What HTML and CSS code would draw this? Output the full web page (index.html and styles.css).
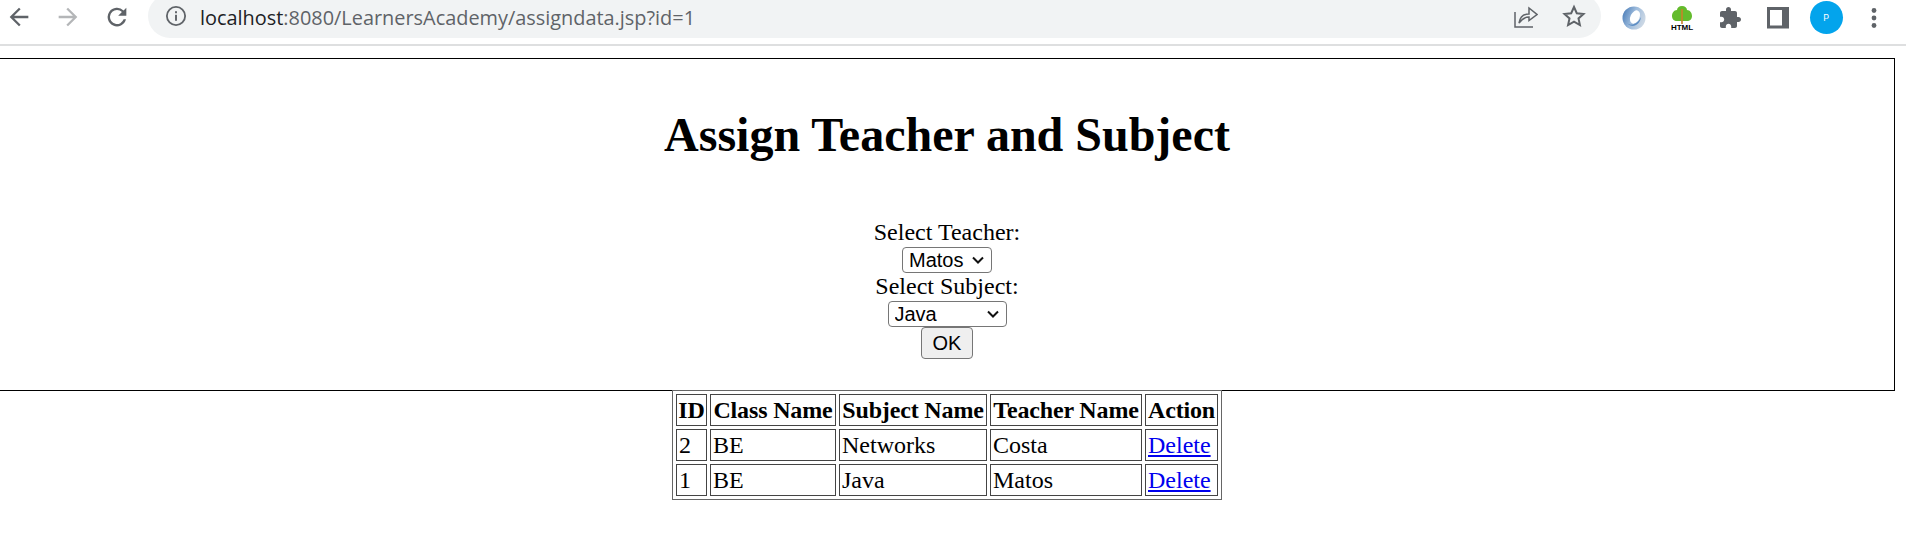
FILE: index.html
```html
<!DOCTYPE html>
<html lang="en">
<head>
<meta charset="utf-8">
<title>Assign Teacher and Subject</title>
<link rel="stylesheet" href="styles.css">
</head>
<body>
<header class="toolbar">
  <nav class="nav-icons">
    <svg class="ico" viewBox="0 0 24 24"><path d="M20 11H7.800l5.600-5.600L12 4l-8 8 8 8 1.400-1.400L7.800 13H20z" fill="#5f6368"/></svg>
    <svg class="ico" viewBox="0 0 24 24"><path d="M4 11h12.200l-5.600-5.600L12 4l8 8-8 8-1.400-1.400 5.600-5.600H4z" fill="#b4b6b8"/></svg>
    <svg class="ico" viewBox="0 0 24 24"><path d="M17.650 6.350A8 8 0 1 0 19.730 14h-2.080A6 6 0 1 1 12 6c1.660 0 3.140.69 4.220 1.780L13 11h7V4z" fill="#5f6368"/></svg>
  </nav>
  <div class="omnibox">
    <svg class="info" viewBox="0 0 20 20"><circle cx="10" cy="10" r="7.600" fill="none" stroke="#5f6368" stroke-width="1.500"/><rect x="9.200" y="9" width="1.600" height="5" fill="#5f6368"/><rect x="9.200" y="6" width="1.600" height="1.700" fill="#5f6368"/></svg>
    <span class="url"><span class="host">localhost</span>:8080/LearnersAcademy/assigndata.jsp?id=1</span>
    <span class="omni-end">
      <svg class="ico-s" viewBox="0 0 24 24"><path d="M1 8V23H19M5 19c1-6 5-9 10-9V4l8 6.500-8 6V13c-4 0-7 2-10 6z" fill="none" stroke="#5f6368" stroke-width="1.500"/></svg>
      <svg class="ico-s" viewBox="0 0 24 24"><path d="M12 3l2.800 6.200 6.700.7-5 4.500 1.400 6.600-5.900-3.400-5.900 3.400 1.400-6.600-5-4.500 6.700-.7z" fill="none" stroke="#5f6368" stroke-width="2"/></svg>
    </span>
  </div>
  <div class="ext-icons">
    <svg class="ext" viewBox="0 0 24 24">
      <defs><linearGradient id="jd" x1="0" y1="0" x2="1" y2="0.400"><stop offset="0" stop-color="#3f74b3"/><stop offset="0.550" stop-color="#9dbbdc"/><stop offset="1" stop-color="#c9d6e4"/></linearGradient></defs>
      <circle cx="12" cy="12" r="11.500" fill="url(#jd)"/>
      <ellipse cx="13" cy="11" rx="4.500" ry="7" fill="#fff" transform="rotate(25 13 11)"/>
      <path d="M5 17c4 3 10 2 14-6-1 8-9 12-14 6z" fill="#5d8dc4"/>
    </svg>
    <svg class="ext" viewBox="0 0 24 24">
      <path d="M12 0c3 0 5 2 5 4 3 0 5 3 5 6s-2 5-5 5H7c-3 0-5-2-5-5s2-6 5-6c0-2 2-4 5-4z" fill="#63bb2c"/>
      <path d="M11.200 3h1.600v15h-1.600z" fill="#c9822a"/>
      <text class="html-tag" x="12" y="23.500" text-anchor="middle">HTML</text>
    </svg>
    <svg class="ext" viewBox="0 0 24 24"><path d="M20.500 11H19V7c0-1.100-.9-2-2-2h-4V3.500C13 2.120 11.880 1 10.500 1S8 2.120 8 3.500V5H4c-1.100 0-1.990.9-1.990 2v3.800H3.500c1.490 0 2.700 1.210 2.700 2.700s-1.210 2.700-2.700 2.700H2V20c0 1.100.9 2 2 2h3.800v-1.500c0-1.490 1.210-2.700 2.700-2.700 1.490 0 2.700 1.210 2.700 2.700V22H17c1.100 0 2-.9 2-2v-4h1.500c1.380 0 2.500-1.120 2.500-2.500S21.880 11 20.500 11z" fill="#5f6368"/></svg>
    <svg class="ext" viewBox="0 0 24 24"><path fill-rule="evenodd" d="M1 1h22v21.500H1zM4 4v15.500h12V4z" fill="#5f6368"/></svg>
    <span class="avatar">P</span>
    <svg class="menu" viewBox="0 0 6 24"><circle cx="3" cy="4.500" r="2.400" fill="#5f6368"/><circle cx="3" cy="12" r="2.400" fill="#5f6368"/><circle cx="3" cy="19.500" r="2.400" fill="#5f6368"/></svg>
  </div>
</header>
<main class="page">
  <section class="panel">
    <h1 class="title">Assign Teacher and Subject</h1>
    <form class="assign">
      <label>Select Teacher:</label><br>
      <select class="sel-teacher"><option>Matos</option></select><br>
      <label>Select Subject:</label><br>
      <select class="sel-subject"><option>Java</option><option>Networks</option></select><br>
      <button type="button" class="ok">OK</button>
    </form>
  </section>
  <table class="grid">
    <tr><th class="c-id">ID</th><th class="c-class">Class Name</th><th class="c-subject">Subject Name</th><th class="c-teacher">Teacher Name</th><th class="c-action">Action</th></tr>
    <tr><td>2</td><td>BE</td><td>Networks</td><td>Costa</td><td><a href="#">Delete</a></td></tr>
    <tr><td>1</td><td>BE</td><td>Java</td><td>Matos</td><td><a href="#">Delete</a></td></tr>
  </table>
</main>
</body>
</html>
```
FILE: styles.css
```css
html, body { margin: 0; padding: 0; background: #fff; }
body { font-family: "Liberation Serif", serif; font-size: 24px; color: #000; overflow: hidden; height: 550px; }
.toolbar { display: flex; align-items: flex-start; height: 44px; border-bottom: 2px solid #dedfe0; background: #fff; overflow: hidden; }
.nav-icons { display: flex; align-items: center; gap: 21px; padding: 3px 0 0 5px; width: 148px; box-sizing: border-box; flex: none; }
.ico { width: 28px; height: 28px; display: block; }
.omnibox { width: 1453px; margin-top: -6px; height: 44px; flex: none; background: #f1f3f4; border-radius: 22px; display: flex; align-items: center; padding-left: 16px; box-sizing: border-box; }
.info { width: 24px; height: 24px; flex: none; }
.url { font-family: "Open Sans", sans-serif; font-size: 19.900px; color: #5f6368; margin: 2px 0 0 12px; white-space: nowrap; }
.host { color: #202124; }
.omni-end { margin-left: auto; display: flex; gap: 24px; padding-right: 15px; }
.ico-s { width: 24px; height: 24px; display: block; }
.ext-icons { display: grid; grid-auto-flow: column; grid-auto-columns: 48px; justify-items: center; align-items: center; padding-left: 9px; height: 35px; }
.ext { width: 24px; height: 24px; display: block; }
.html-tag { font: bold 8px "Liberation Sans", sans-serif; fill: #000; }
.avatar { width: 33px; height: 33px; border-radius: 50%; background: #03a4ec; color: #fff; font: 9px "Roboto", sans-serif; display: flex; align-items: center; justify-content: center; }
.menu { width: 6px; height: 24px; }
.page { padding-top: 12px; width: 1894px; }
.panel { width: 1894px; height: 331px; border: 1px solid #000; text-align: center; margin-left: -1px; }
.title { font-size: 48px; font-weight: bold; margin: 48px 0 57px; line-height: 55px; }
.assign { line-height: 27px; }
select, .ok { font-family: "Liberation Sans", sans-serif; font-size: 20px; color: #000; }
select { appearance: none; height: 26px; border: 1px solid #767676; border-radius: 4px; padding: 0 0 0 6px; background: #fff url("data:image/svg+xml,%3Csvg xmlns='http://www.w3.org/2000/svg' width='12' height='8' viewBox='0 0 12 8'%3E%3Cpath d='M1 1.500l5 5 5-5' fill='none' stroke='%23111' stroke-width='2'/%3E%3C/svg%3E") no-repeat right 7px center; }
.sel-teacher { width: 90px; }
.sel-subject { width: 119px; }
.ok { width: 52px; height: 32px; border: 1px solid #767676; border-radius: 4px; background: #efefef; padding: 0; }
.grid { margin: -1px auto 0; width: 550px; table-layout: fixed; border: 1px solid #666; border-collapse: separate; border-spacing: 3px; }
.grid th, .grid td { box-sizing: border-box; border: 1px solid #444; padding: 1px 2px; text-align: left; line-height: 28px; white-space: nowrap; }
.grid th { text-align: center; letter-spacing: -0.150px; padding: 1px 0; }
.c-id { width: 31px; }
.c-class { width: 126px; }
.c-subject { width: 148px; }
.c-teacher { width: 152px; }
.c-action { width: 73px; }
a { color: #00e; }
```
